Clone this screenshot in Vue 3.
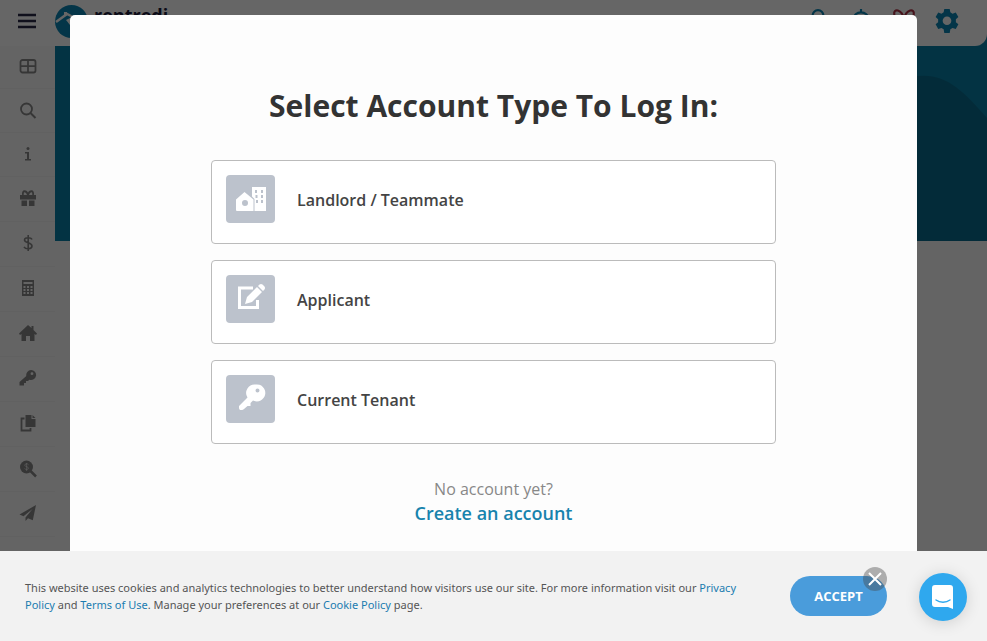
<template>
  <div class="page">
    <!-- Header -->
    <header class="topbar">
      <button class="menu-btn" aria-label="Menu">
        <svg width="18" height="16" viewBox="0 0 18 16" fill="none" stroke="currentColor" stroke-width="2.4">
          <path d="M0 2h18M0 8h18M0 14h18" />
        </svg>
      </button>
      <a href="#" class="logo">
        <svg width="33" height="33" viewBox="0 0 33 33" aria-hidden="true">
          <circle cx="16.5" cy="16.5" r="16.5" fill="#0c86b4" />
          <path d="M1 17 12 9l4 2 13 9" fill="none" stroke="#fff" stroke-width="2.5" />
          <path d="M11 15l4 5 6-5-4-3" fill="#fff" />
          <path d="M9 7h3v3l-3 2z" fill="#fff" />
        </svg>
        <span class="logo-text">rentredi</span>
      </a>
      <div class="topbar-actions">
        <button
          v-for="action in actions"
          :key="action.label"
          class="action-btn"
          :class="action.tone"
          :aria-label="action.label"
        >
          <svg width="26" height="26" viewBox="0 0 24 24" fill="none" stroke="currentColor" stroke-width="2" v-html="action.icon"></svg>
        </button>
      </div>
    </header>

    <div class="body">
      <!-- Sidebar -->
      <nav class="sidebar">
        <a v-for="item in navItems" :key="item.label" href="#" class="side-item" :aria-label="item.label">
          <svg width="18" height="18" viewBox="0 0 18 18" fill="currentColor" v-html="item.icon"></svg>
        </a>
      </nav>
      <main class="content">
        <div class="hero">
          <svg class="hero-shape" width="100" height="195" viewBox="0 0 100 195" aria-hidden="true">
            <path d="M0 30H32C60 28 76 45 100 72V195H0z" fill="#096d8e" />
          </svg>
        </div>
      </main>
    </div>

    <!-- Account modal -->
    <div class="overlay">
      <section class="modal" role="dialog" aria-labelledby="modal-title">
        <h1 id="modal-title" class="modal-title">Select Account Type To Log In:</h1>
        <div class="accounts">
          <button v-for="account in accounts" :key="account.label" class="account">
            <span class="account-icon">
              <svg width="32" height="32" viewBox="0 0 32 32" fill="#fff" v-html="account.icon"></svg>
            </span>
            <span class="account-label">{{ account.label }}</span>
          </button>
        </div>
        <p class="no-account">No account yet?</p>
        <a href="#" class="create-link">Create an account</a>
      </section>
    </div>

    <!-- Cookie bar -->
    <div class="cookie-bar">
      <p class="cookie-text">
        This website uses cookies and analytics technologies to better understand how visitors use our site. For more information visit our
        <a href="#">Privacy Policy</a> and <a href="#">Terms of Use</a>. Manage your preferences at our <a href="#">Cookie Policy</a> page.
      </p>
      <div class="accept-wrap">
        <button class="accept-btn">ACCEPT</button>
        <button class="dismiss-btn" aria-label="Close">
          <svg width="24" height="24" viewBox="0 0 24 24" fill="none" stroke="#fff" stroke-width="2">
            <path d="m6 6 12 12M18 6 6 18" />
          </svg>
        </button>
      </div>
    </div>

    <button class="chat-btn" aria-label="Open chat">
      <svg width="24" height="26" viewBox="0 0 24 26">
        <path d="M4 1h15a3 3 0 0 1 3 3v21l-5-2H4a3 3 0 0 1-3-3V4a3 3 0 0 1 3-3z" fill="#fff" />
        <path d="M5 16c4 3 10 3 14 0" fill="none" stroke="#2fa8ee" stroke-width="1.4" stroke-linecap="round" />
      </svg>
    </button>
  </div>
</template>

<script setup>
const actions = [
  { label: 'Profile', tone: 'blue', icon: '<circle cx="12" cy="7" r="5"/><path d="M3 22a9 9 0 0 1 18 0"/>' },
  { label: 'Notifications', tone: 'blue', icon: '<path d="M12 1v3M5 15v-5a7 6 0 0 1 14 0v5l2 3H3z"/>' },
  { label: 'Rewards', tone: 'red', icon: '<path d="M12 10C10 1 2 0 3 6c0 3 4 4 9 4M12 10c2-9 10-10 9-4 0 3-4 4-9 4M3 10h18v11H3z"/>' },
  {
    label: 'Settings',
    tone: 'blue',
    icon: '<path fill="currentColor" stroke="none" fill-rule="evenodd" d="M9.500 1h5l.6 3 2 1.200 3-1 2.400 4.200-2.300 2v2.700l2.300 2-2.400 4.300-3-1-2 1.200-.6 3.400h-5l-.6-3.400-2-1.200-3 1-2.400-4.300 2.300-2v-2.700l-2.300-2 2.400-4.200 3 1 2-1.200zM12 7.800a4 4 0 1 0 0 8 4 4 0 0 0 0-8z"/>'
  }
]

const navItems = [
  {
    label: 'Dashboard',
    icon: '<rect x="1.500" y="2" width="15" height="12.500" rx="2" fill="none" stroke="currentColor" stroke-width="1.800"/><path d="M9 2v12.500M1.500 8.200h15" stroke="currentColor" stroke-width="1.800"/>'
  },
  {
    label: 'Search',
    icon: '<circle cx="7.500" cy="7" r="5.500" fill="none" stroke="currentColor" stroke-width="1.800"/><path d="m11.500 11 5 5" stroke="currentColor" stroke-width="2"/>'
  },
  {
    label: 'Info',
    icon: '<circle cx="9" cy="2.500" r="1.500"/><path d="M6 6h4v7h2v1.600H6V13h2V7.600H6z"/>'
  },
  {
    label: 'Gifts',
    icon: '<path d="M1 5h16v4.500H1zM2.500 10.500h5.500v5.500H2.500zM10 10.500h5.500v5.500H10z"/><path d="M9 5C7.500 0 3 0 4 5M9 5c1.500-5 6-5 5 0" fill="none" stroke="currentColor" stroke-width="1.800"/>'
  },
  {
    label: 'Payments',
    icon: '<path d="M13 4.500C12 2.500 5.500 1.800 5.500 5s7.500 2.500 7.500 6-6.500 3.500-8 .8M9.200 0v16" fill="none" stroke="currentColor" stroke-width="1.600"/>'
  },
  {
    label: 'Calculator',
    icon: '<path fill-rule="evenodd" d="M3 0h12v16H3zM4.500 2v2h9V2zM4.500 6v2h2V6zM8 6v2h2V6zM11.500 6v2h2V6zM4.500 9v2h2V9zM8 9v2h2V9zM11.500 9v2h2V9zM4.500 12v2h2v-2zM8 12v2h2v-2zM11.500 12v2h2v-2z"/>'
  },
  {
    label: 'Properties',
    icon: '<path d="m9 0 3.500 3V1h2v4L18 8.500 17 10l-1.500-1v7H11v-5H7v5H2.500V9L1 10 0 8.500z"/>'
  },
  {
    label: 'Keys',
    icon: '<path fill-rule="evenodd" d="M12 0a5 5 0 1 1-1.600 9.700L9 11H7v2H5v2.500H.5V12l6.800-6A5 5 0 0 1 12 0zM13 2.300a1.400 1.400 0 1 0 0 2.800 1.400 1.400 0 0 0 0-2.800z"/>'
  },
  {
    label: 'Documents',
    icon: '<path d="M6.500 0h6v4h4v8h-10zM13.500 0l3 3h-3z"/><path d="M5.500 3.500h-3v12h9V13" fill="none" stroke="currentColor" stroke-width="1.800"/>'
  },
  {
    label: 'Screening',
    icon: '<circle cx="7.500" cy="7" r="6.500"/><path d="m11 10.500 6 6" stroke="currentColor" stroke-width="2.500"/><path d="M9.500 4.700c-1-1.500-4-1-3.800.6s3.800 1.200 3.800 2.800-3 1.800-4 .4M7.600 3v8" fill="none" stroke="#fff" stroke-width=".9" opacity=".6"/>'
  },
  {
    label: 'Send',
    icon: '<path d="M17 0 .5 9.500l4 1.800 9-7.300-7 8.500V16L9 13.200l4.800 2z"/>'
  }
]

const accounts = [
  {
    label: 'Landlord / Teammate',
    icon: '<path fill-rule="evenodd" d="m9.500 9 9 7.500V28H2q-1 0-1-1V16.500zM10 17a3 3 0 1 0 0 6 3 3 0 0 0 0-6z"/><path fill-rule="evenodd" d="M17 4h14v24H19.500V16L17 13.500zM20 7v3h2V7zM26 7v3h2V7zM26 12v3h2v-3zM20.500 12v3h2v-3zM26 17v3h2v-3zM21 17v3h2v-3z"/>'
  },
  {
    label: 'Applicant',
    icon: '<path d="M18 5H4.500v19.500h18V17" fill="none" stroke="#fff" stroke-width="3"/><path d="m10 21 2-7L22 4l5 5-10 10zM23 3l1.500-1.500q1.500-1 3 0l2 2q1 1.500 0 3L28 8z"/>'
  },
  {
    label: 'Current Tenant',
    icon: '<path fill-rule="evenodd" d="M20.500 1.500a8.500 8.500 0 1 1-2.500 16L15.500 20v3h-3L9 26q-1 1-2 1H5q-1-1-1-2v-2l8.500-8.500a8.500 8.500 0 0 1 8-13zM22.500 5.500a2 2 0 1 0 0 4 2 2 0 0 0 0-4z"/>'
  }
]
</script>

<style>
body {
  background: #fff;
}
</style>

<style scoped>
.page {
  min-height: 100vh;
  display: flex;
  flex-direction: column;
  font-family: "Open Sans", "Noto Sans", sans-serif;
  background: #fff;
}

button {
  font-family: inherit;
  border: none;
  padding: 0;
  background: none;
  cursor: pointer;
}

a {
  text-decoration: none;
}

svg {
  display: block;
}

/* ── Header ────────────────────────────────── */
.topbar {
  position: relative;
  z-index: 1;
  height: 46px;
  display: flex;
  align-items: center;
  padding: 0 27px 4px 18px;
  box-sizing: border-box;
  background: #fff;
  border-radius: 0 0 12px 0;
}

.menu-btn {
  color: #2a2a48;
  padding-right: 19px;
}

.logo {
  display: flex;
  align-items: center;
  gap: 6px;
}

.logo-text {
  font-size: 18px;
  line-height: 20px;
  font-weight: 700;
  color: #1c1c3c;
  padding-bottom: 12px;
}

.topbar-actions {
  margin-left: auto;
  display: flex;
  gap: 17px;
}

.blue { color: #0c86b4; }
.red { color: #b03045; }

/* ── Sidebar ───────────────────────────────── */
.body {
  flex: 1;
  display: flex;
}

.sidebar {
  width: 55px;
  flex-shrink: 0;
  background: #fafafa;
}

.side-item {
  display: flex;
  align-items: center;
  justify-content: center;
  height: 43px;
  border-bottom: 1px solid #f3f3f3;
  color: #888;
}

.side-item:first-child {
  height: 42px;
}

.side-item:nth-child(n + 4) {
  height: 44px;
}

/* ── Hero ──────────────────────────────────── */
.content {
  flex: 1;
  background: #fafafa;
}

.hero {
  height: 195px;
  display: flex;
  justify-content: flex-end;
  background: #0880a8;
  box-shadow: 0 -14px #0880a8;
}

/* ── Modal ─────────────────────────────────── */
.overlay {
  position: fixed;
  inset: 0;
  z-index: 10;
  padding: 15px 70px 0;
  overflow: hidden;
  background: rgba(0, 0, 0, 0.6);
}

.modal {
  min-height: 100%;
  padding-top: 69px;
  box-sizing: border-box;
  display: flex;
  flex-direction: column;
  align-items: center;
  background: #fdfdfd;
  border-radius: 5px;
}

.modal-title {
  margin: 0 0 32px;
  font-size: 30px;
  line-height: 44px;
  font-weight: 700;
  color: #333;
}

.accounts {
  width: 66.7%;
  display: flex;
  flex-direction: column;
  gap: 16px;
}

.account {
  display: flex;
  align-items: flex-start;
  gap: 22px;
  height: 84px;
  padding: 14px;
  text-align: left;
  background: #fff;
  border: 1px solid #bbb;
  border-radius: 4px;
}

.account-icon {
  width: 49px;
  height: 48px;
  display: flex;
  align-items: center;
  justify-content: center;
  background: #bcc2cc;
  border-radius: 4px;
}

.account-label {
  font-size: 16px;
  line-height: 50px;
  font-weight: 600;
  color: #444;
}

.no-account {
  margin: 33px 0 0;
  font-size: 16px;
  line-height: 24px;
  color: #888;
}

.create-link {
  font-size: 18px;
  line-height: 24px;
  font-weight: 600;
  color: #1883ad;
}

/* ── Cookie bar ────────────────────────────── */
.cookie-bar {
  position: fixed;
  inset: auto 0 0;
  z-index: 20;
  height: 90px;
  display: flex;
  align-items: center;
  gap: 32px;
  padding: 0 100px 0 25px;
  box-sizing: border-box;
  background: #f2f2f2;
}

.cookie-text {
  flex: 1;
  margin: 0;
  font-family: "Noto Sans", "Open Sans", sans-serif;
  font-size: 11px;
  line-height: 17px;
  color: #555;
}

.cookie-text a {
  color: #1a7cb0;
}

.accept-wrap {
  position: relative;
}

.accept-btn {
  width: 97px;
  height: 40px;
  display: block;
  border-radius: 20px;
  background: #4a9cdb;
  color: #fff;
  font-size: 13px;
  font-weight: 700;
}

.dismiss-btn {
  position: absolute;
  top: -9px;
  right: 0;
  border-radius: 50%;
  background: rgba(70, 70, 70, 0.4);
}

/* ── Chat ──────────────────────────────────── */
.chat-btn {
  position: fixed;
  right: 20px;
  bottom: 20px;
  z-index: 30;
  width: 48px;
  height: 48px;
  display: flex;
  align-items: center;
  justify-content: center;
  border-radius: 50%;
  background: #2fa8ee;
  box-shadow: 0 2px 16px rgba(0, 0, 0, 0.14);
}
</style>
